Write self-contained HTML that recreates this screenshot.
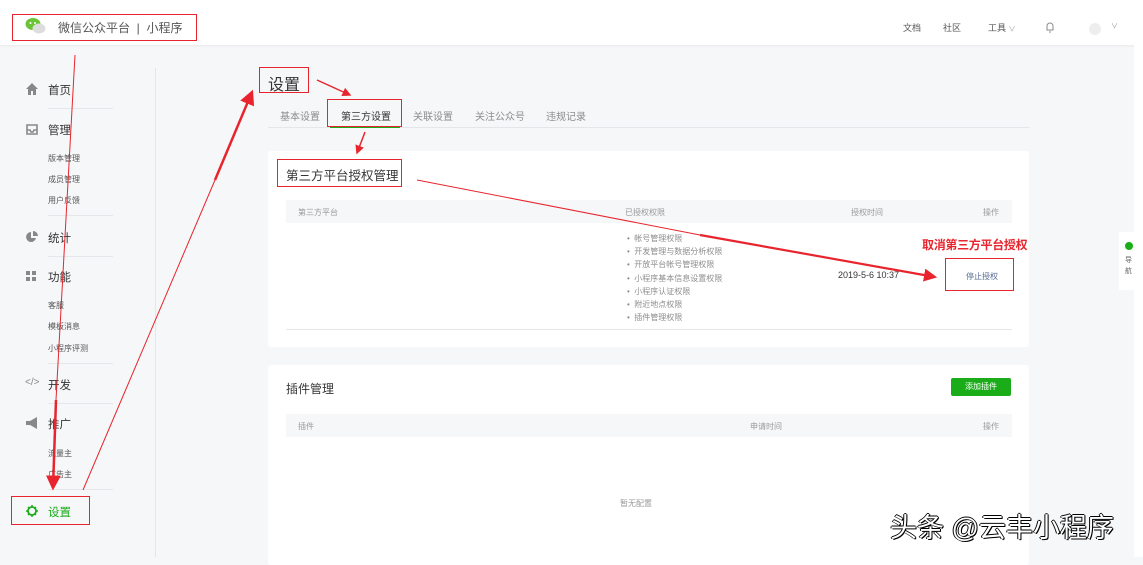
<!DOCTYPE html><html><head><meta charset="utf-8"><style>
*{margin:0;padding:0;box-sizing:border-box}
body{width:1143px;height:557px;overflow:hidden;background:#f6f7f9;font-family:"Liberation Sans","Noto Sans CJK SC",sans-serif;position:relative;color:#353535}
.a{position:absolute;white-space:nowrap}
.hdr{position:absolute;left:0;top:0;width:1143px;height:45px;background:#fff;box-shadow:0 1px 2px rgba(0,0,0,.06)}
.rb{position:absolute;border:1.5px solid #e8252e}
.nav{font-size:11.5px;color:#353535}
.sub{font-size:8px;color:#555}
.dv{position:absolute;left:48px;width:65px;height:1px;background:#e7e7eb}
.card{position:absolute;left:268px;width:761px;background:#fff;border-radius:3px}
.th{position:absolute;left:286px;width:726px;height:23px;background:#f6f7f9}
.g{font-size:8px;color:#9a9a9a}
.li{font-size:8px;color:#8d8d8d}
</style></head><body>
<div class="hdr"></div>
<svg class="a" style="left:25px;top:17px" width="22" height="18" viewBox="0 0 22 18"><ellipse cx="8" cy="7" rx="7.5" ry="6" fill="#6bc435"/><ellipse cx="14" cy="11.5" rx="6.5" ry="5" fill="#ddd"/><circle cx="5.5" cy="6" r="1" fill="#fff"/><circle cx="10" cy="6" r="1" fill="#fff"/></svg>
<div class="a" style="left:58px;top:19px;font-size:12px;color:#555">微信公众平台 &nbsp;|&nbsp; 小程序</div>
<div class="rb" style="left:12px;top:14px;width:185px;height:27px"></div>
<div class="a" style="left:903px;top:21px;font-size:9px;color:#555">文档</div>
<div class="a" style="left:943px;top:21px;font-size:9px;color:#555">社区</div>
<div class="a" style="left:988px;top:21px;font-size:9px;color:#555">工具 <span style="color:#999;font-size:7px">∨</span></div>
<svg class="a" style="left:1045px;top:21px" width="10" height="12"><path d="M2 9V5a3 3 0 0 1 6 0v4H1.5h7M4 11h2" stroke="#888" fill="none"/></svg>
<div class="a" style="left:1089px;top:23px;width:12px;height:12px;border-radius:6px;background:#eee"></div>
<div class="a" style="left:1111px;top:21px;font-size:7px;color:#999">∨</div>
<div class="a" style="left:1134px;top:45px;width:9px;height:512px;background:#fff"></div>
<div class="a" style="left:1119px;top:232px;width:16px;height:58px;background:#fff"></div>
<div class="a" style="left:1125px;top:242px;width:8px;height:8px;border-radius:4px;background:#1aad19"></div>
<div class="a" style="left:1125px;top:255px;font-size:7px;line-height:11px;color:#666">导<br>航</div>
<div class="a" style="left:155px;top:68px;width:1px;height:489px;background:#e4e6ea"></div>
<svg class="a" style="left:26px;top:83px" width="12" height="12"><path d="M6 0L0 6h2v6h3V8h2v4h3V6h2z" fill="#888"/></svg>
<div class="a nav" style="left:48px;top:82px">首页</div><div class="dv" style="top:108px"></div>
<svg class="a" style="left:26px;top:123px" width="12" height="12"><path d="M1 2h10v9H1z M1 7h3l1 2h2l1-2h3" stroke="#888" stroke-width="1.6" fill="none"/></svg>
<div class="a nav" style="left:48px;top:122px">管理</div>
<div class="a sub" style="left:48px;top:153px">版本管理</div><div class="a sub" style="left:48px;top:174px">成员管理</div><div class="a sub" style="left:48px;top:195px">用户反馈</div><div class="dv" style="top:215px"></div>
<svg class="a" style="left:26px;top:231px" width="12" height="12"><path d="M5 1a5 5 0 1 0 5 6H5z M7 0v5h5a5 5 0 0 0-5-5z" fill="#888"/></svg>
<div class="a nav" style="left:48px;top:230px">统计</div><div class="dv" style="top:256px"></div>
<svg class="a" style="left:26px;top:271px" width="11" height="11"><rect width="4" height="4" fill="#888"/><rect x="6" width="4" height="4" fill="#888"/><rect y="6" width="4" height="4" fill="#888"/><rect x="6" y="6" width="4" height="4" fill="#888"/></svg>
<div class="a nav" style="left:48px;top:269px">功能</div>
<div class="a sub" style="left:48px;top:300px">客服</div><div class="a sub" style="left:48px;top:321px">模板消息</div><div class="a sub" style="left:48px;top:343px">小程序评测</div><div class="dv" style="top:363px"></div>
<div class="a" style="left:25px;top:377px;font-size:10px;color:#888">&lt;/&gt;</div>
<div class="a nav" style="left:48px;top:377px">开发</div><div class="dv" style="top:403px"></div>
<svg class="a" style="left:26px;top:417px" width="13" height="12"><path d="M0 4h4l7-4v12L4 8H0z" fill="#888"/></svg>
<div class="a nav" style="left:48px;top:416px">推广</div>
<div class="a sub" style="left:48px;top:448px">流量主</div><div class="a sub" style="left:48px;top:469px">广告主</div><div class="dv" style="top:489px"></div>
<svg class="a" style="left:26px;top:505px" width="12" height="12"><circle cx="6" cy="6" r="4" stroke="#1aad19" stroke-width="1.8" fill="none"/><path d="M6 0v2M6 10v2M0 6h2M10 6h2M2 2l1.4 1.4M8.6 8.6L10 10M2 10l1.4-1.4M8.6 3.4L10 2" stroke="#1aad19" stroke-width="1.5"/></svg>
<div class="a" style="left:48px;top:504px;font-size:11.5px;color:#1aad19">设置</div>
<div class="rb" style="left:11px;top:496px;width:79px;height:29px"></div>
<div class="a" style="left:268px;top:71px;font-size:16px;color:#353535">设置</div>
<div class="rb" style="left:259px;top:67px;width:50px;height:26px"></div>
<div class="a" style="left:268px;top:127px;width:761px;height:1px;background:#e4e6ea"></div>
<div class="a" style="left:330px;top:126px;width:70px;height:2px;background:#1aad19"></div>
<div class="a" style="left:280px;top:108px;font-size:10px;color:#8d8d8d">基本设置</div>
<div class="a" style="left:341px;top:108px;font-size:10px;color:#353535">第三方设置</div>
<div class="a" style="left:413px;top:108px;font-size:10px;color:#8d8d8d">关联设置</div>
<div class="a" style="left:475px;top:108px;font-size:10px;color:#8d8d8d">关注公众号</div>
<div class="a" style="left:546px;top:108px;font-size:10px;color:#8d8d8d">违规记录</div>
<div class="rb" style="left:327px;top:99px;width:75px;height:28px"></div>
<div class="card" style="top:151px;height:196px"></div>
<div class="a" style="left:286px;top:165px;font-size:12.5px">第三方平台授权管理</div>
<div class="rb" style="left:277px;top:159px;width:125px;height:28px"></div>
<div class="th" style="top:200px"></div>
<div class="a g" style="left:298px;top:207px">第三方平台</div><div class="a g" style="left:625px;top:207px">已授权权限</div><div class="a g" style="left:851px;top:207px">授权时间</div><div class="a g" style="left:983px;top:207px">操作</div>
<div class="a li" style="left:627px;top:232px;line-height:13.2px">• &nbsp;帐号管理权限<br>• &nbsp;开发管理与数据分析权限<br>• &nbsp;开放平台帐号管理权限<br>• &nbsp;小程序基本信息设置权限<br>• &nbsp;小程序认证权限<br>• &nbsp;附近地点权限<br>• &nbsp;插件管理权限</div>
<div class="a" style="left:838px;top:270px;font-size:9px;color:#353535">2019-5-6 10:37</div>
<div class="a" style="left:966px;top:271px;font-size:8px;color:#576b95">停止授权</div>
<div class="rb" style="left:945px;top:258px;width:69px;height:33px"></div>
<div class="a" style="left:922px;top:236px;font-size:12px;font-weight:bold;color:#e8252e;letter-spacing:-0.3px">取消第三方平台授权</div>
<div class="a" style="left:286px;top:329px;width:726px;height:1px;background:#e7e7eb"></div>
<div class="card" style="top:365px;height:200px"></div>
<div class="a" style="left:286px;top:380px;font-size:12px">插件管理</div>
<div class="a" style="left:951px;top:378px;width:60px;height:18px;background:#1aad19;border-radius:2px;color:#fff;font-size:8px;text-align:center;line-height:18px">添加插件</div>
<div class="th" style="top:414px"></div>
<div class="a g" style="left:298px;top:421px">插件</div><div class="a g" style="left:750px;top:421px">申请时间</div><div class="a g" style="left:983px;top:421px">操作</div>
<div class="a g" style="left:620px;top:498px">暂无配置</div>
<div class="a" style="left:890px;top:506px;font-size:27px;color:#fff;text-shadow:1px 1px 0 #000,-1px 0 0 #000,0 -1px 0 #000,1px 0 0 #000">头条 @云丰小程序</div>
<svg class="a" style="left:0;top:0" width="1143" height="557">
<defs><marker id="m" markerWidth="6" markerHeight="6" refX="5" refY="3" orient="auto"><path d="M0 0L6 3L0 6z" fill="#e8252e"/></marker></defs>
<g stroke="#e8252e" fill="none">
<path d="M75 55L56 400" stroke-width="1"/><path d="M56 400L53 488" stroke-width="2.5" marker-end="url(#m)"/>
<path d="M83 490L215 180" stroke-width="1"/><path d="M215 180L252 92" stroke-width="2.5" marker-end="url(#m)"/>
<path d="M317 80L350 95" stroke-width="1.5" marker-end="url(#m)"/>
<path d="M365 132L357 153" stroke-width="1.5" marker-end="url(#m)"/>
<path d="M417 180L700 235" stroke-width="1"/><path d="M700 235L935 277" stroke-width="2.2" marker-end="url(#m)"/>
</g></svg>
</body></html>
